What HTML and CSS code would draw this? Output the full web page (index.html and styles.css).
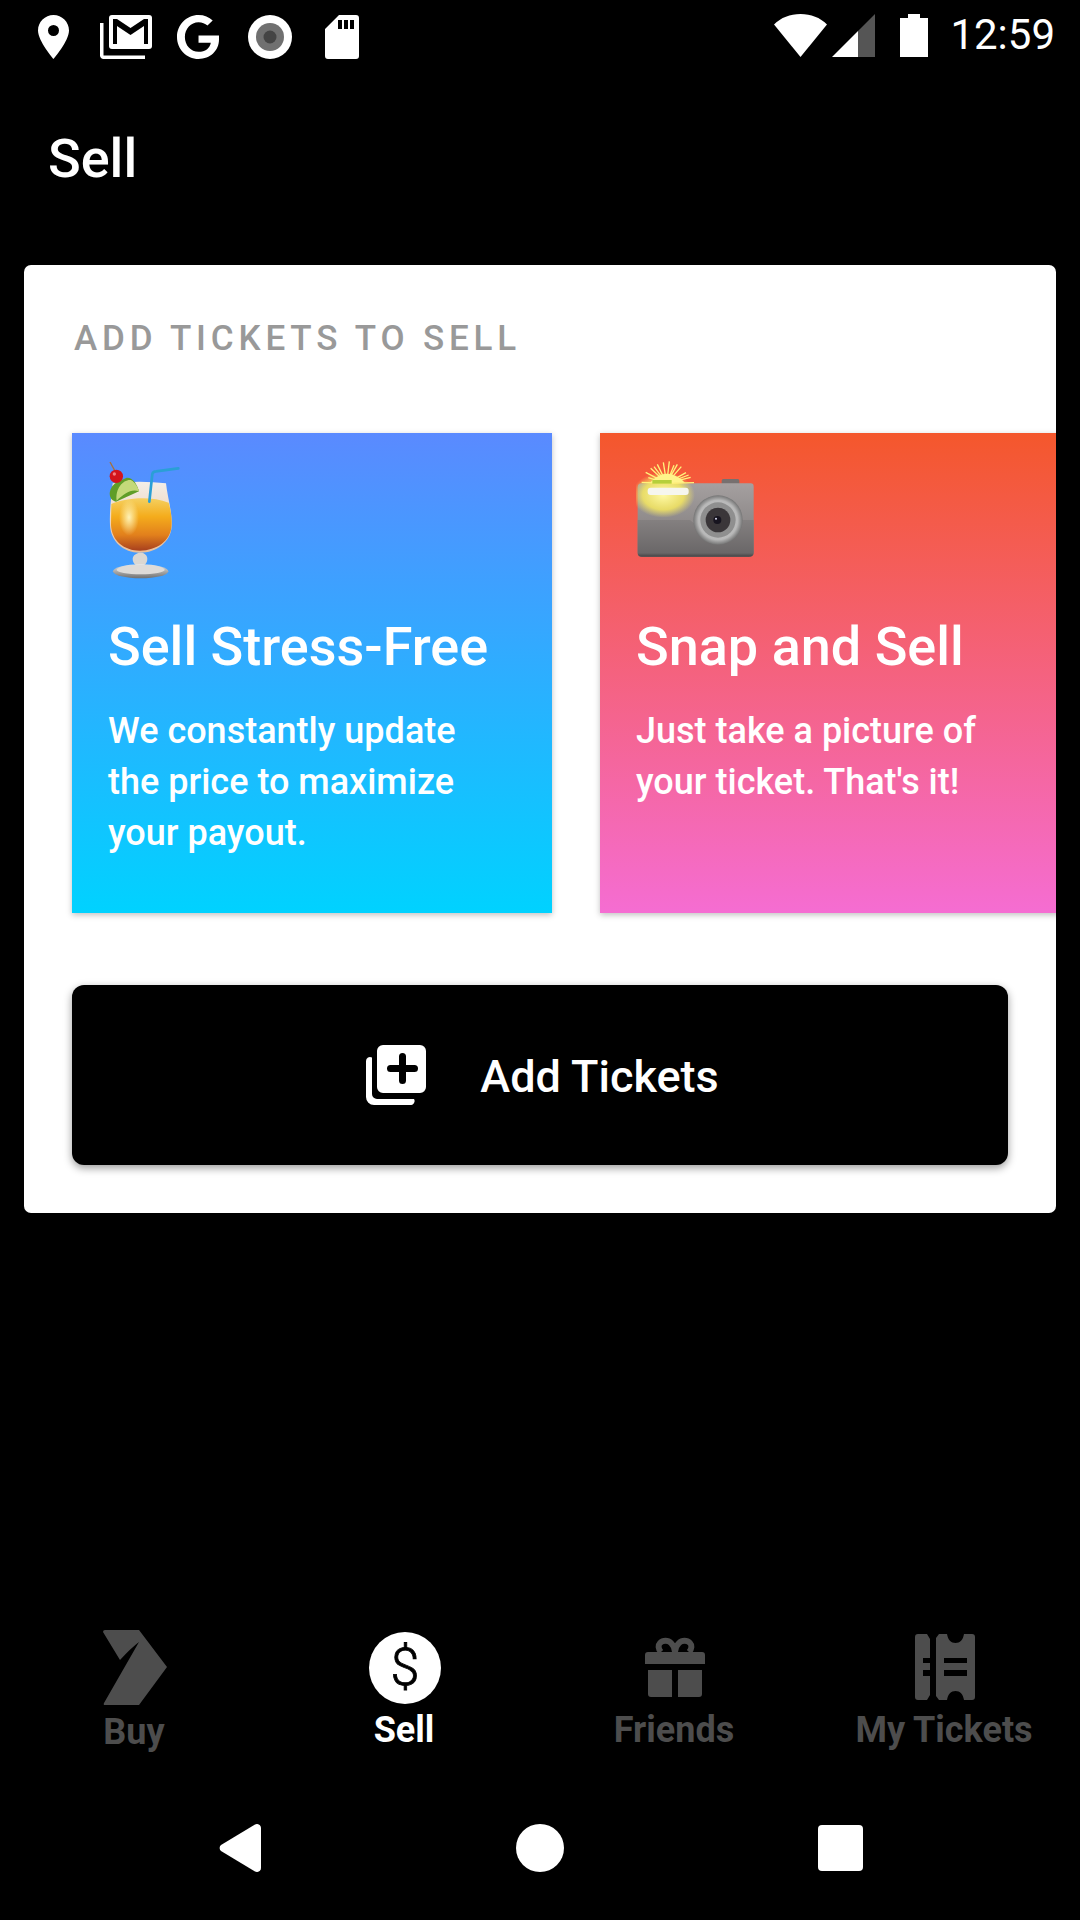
FILE: index.html
```html
<!DOCTYPE html>
<html lang="en">
<head>
<meta charset="utf-8">
<title>Sell</title>
<link rel="stylesheet" href="styles.css">
</head>
<body>
<div class="screen">
  <header class="status">
    <div class="status-left">
      <svg class="ic-loc" viewBox="0 0 31 44" preserveAspectRatio="none"><path fill="#fff" fill-rule="evenodd" d="M15.500 0C7 0 0 6.900 0 15.500 0 26 15.500 44 15.500 44S31 26 31 15.500C31 6.900 24 0 15.500 0zm0 10a5.500 5.500 0 1 1 0 11 5.500 5.500 0 0 1 0-11z"/></svg>
      <svg class="ic-gmail" viewBox="0 0 52 44"><path fill="none" stroke="#fff" stroke-width="3.5" d="M1.750 8v32.500a1.750 1.750 0 0 0 1.750 1.750H45"/><rect x="9" y="0" width="43" height="34" rx="3" fill="#fff"/><path d="M13 4h4L30.500 13 44 4h4V29h-4V11L30.500 20 17 11V29h-4z" fill="#000"/></svg>
      <svg class="ic-g" viewBox="0 0 40 43" preserveAspectRatio="none"><path fill="#fff" d="M20.500 0C26 0 30.500 2 34 5.300l-5 5C26.800 8.300 24 7 20.500 7 13.300 7 7.500 13.300 7.500 21.500S13.300 36 20.500 36c6.500 0 10.800-3.700 11.700-9H20.500v-7H40v4C40 35 31.500 43 20.500 43 9 43 0 33.500 0 21.500S9 0 20.500 0z"/></svg>
      <svg class="ic-rec" viewBox="0 0 44 44"><circle cx="22" cy="22" r="22" fill="#fff"/><circle cx="22" cy="22" r="14" fill="#707070"/><circle cx="22" cy="22" r="6.500" fill="#444"/></svg>
      <svg class="ic-sd" viewBox="0 0 34 44"><path fill="#fff" fill-rule="evenodd" d="M14 0h17a3 3 0 0 1 3 3v38a3 3 0 0 1-3 3H3a3 3 0 0 1-3-3V14zm-1 5v9h4V5zm6 0v9h4V5zm6 0v9h4V5z"/></svg>
    </div>
    <div class="status-right">
      <svg class="ic-wifi" viewBox="0 0 53 43"><path fill="#fff" d="M26.500 0C37 0 46 3.500 53 10.500L26.500 43 0 10.500C7 3.500 16 0 26.500 0z"/></svg>
      <svg class="ic-signal" viewBox="0 0 43 43"><path fill="#555" d="M43 0v43H26V17z"/><path fill="#fff" d="M26 17v26H0z"/></svg>
      <svg class="ic-batt" viewBox="0 0 28 43"><path fill="#fff" d="M8 0h12v4h8v39H0V4h8z"/></svg>
      <span class="clock">12:59</span>
    </div>
  </header>

  <div class="appbar"><h1 class="title">Sell</h1></div>

  <main class="card">
    <h2 class="eyebrow">ADD TICKETS TO SELL</h2>
    <div class="tiles">
      <article class="tile tile-blue">
        <svg class="emoji" viewBox="144 90 240 360">
          <defs>
            <linearGradient id="drink" x1="0" y1="0" x2="0" y2="1">
              <stop offset="0" stop-color="#f5d060"/><stop offset=".35" stop-color="#f4ac1c"/><stop offset=".7" stop-color="#e2801c"/><stop offset="1" stop-color="#a8401e"/>
            </linearGradient>
            <radialGradient id="shine" cx=".5" cy=".5" r=".5">
              <stop offset="0" stop-color="#fff6c0" stop-opacity=".95"/><stop offset="1" stop-color="#fff3b0" stop-opacity="0"/>
            </radialGradient>
            <linearGradient id="foot" x1="0" y1="0" x2="0" y2="1">
              <stop offset="0" stop-color="#e8e8e8"/><stop offset="1" stop-color="#707070"/>
            </linearGradient>
            <linearGradient id="glass" x1="0" y1="0" x2="0" y2="1">
              <stop offset="0" stop-color="#f3eee8"/><stop offset="1" stop-color="#e9bf9a"/>
            </linearGradient>
          </defs>
          <path d="M158 160Q240 150 318 160C322 200 338 250 335 290 332 335 290 368 240 368 190 368 152 335 150 285 148 245 154 200 158 160z" fill="url(#glass)"/>
          <path d="M154 222C190 205 270 195 326 218 335 250 336 275 334 292 331 332 290 362 240 362 192 362 155 332 153 285z" fill="url(#drink)"/>
          <ellipse cx="207" cy="262" rx="30" ry="55" fill="url(#shine)"/>
          <path d="M268 215L277 132Q279 124 288 124L355 115" fill="none" stroke="#2a9fd6" stroke-width="8" stroke-linecap="round" stroke-linejoin="round"/>
          <path d="M236 368h12q14 6 14 18t-10 20l8 18h-40l8-18q-10-8-10-20t18-18z" fill="#dad7d2"/>
          <ellipse cx="242" cy="424" rx="83" ry="21" fill="url(#foot)"/>
          <ellipse cx="242" cy="419" rx="72" ry="14" fill="#dedbd8"/>
          <path d="M168 215C140 208 146 172 168 158L200 143C220 142 232 165 237 184z" fill="#5f9d28"/>
          <path d="M170 212C165 175 190 148 212 150 225 156 233 170 237 184 215 175 192 190 170 212z" fill="#c4d97a"/>
          <path d="M150 96L166 125" stroke="#a5713f" stroke-width="4"/>
          <circle cx="169" cy="139" r="20" fill="#d2141c"/>
          <circle cx="163" cy="132" r="5" fill="#f47c7c"/>
        </svg>
        <h3 class="tile-title">Sell Stress-Free</h3>
        <p class="tile-body">We constantly update the price to maximize your payout.</p>
      </article>
      <article class="tile tile-red">
        <svg class="emoji" viewBox="108 90 360 360">
          <defs>
            <linearGradient id="body" x1="0" y1="0" x2="0" y2="1">
              <stop offset="0" stop-color="#a5a0a0"/><stop offset="1" stop-color="#7a7676"/>
            </linearGradient>
            <linearGradient id="lower" x1="0" y1="0" x2="0" y2="1">
              <stop offset="0" stop-color="#848080"/><stop offset=".9" stop-color="#6a6768"/><stop offset="1" stop-color="#454345"/>
            </linearGradient>
            <radialGradient id="glow" cx=".5" cy=".5" r=".5">
              <stop offset="0" stop-color="#fffaa8"/><stop offset=".65" stop-color="#f6e860" stop-opacity=".85"/><stop offset="1" stop-color="#f4e56a" stop-opacity="0"/>
            </radialGradient>
            <radialGradient id="lens" cx=".5" cy=".5" r=".5">
              <stop offset="0" stop-color="#d5d5d5"/><stop offset=".8" stop-color="#b8b8b8"/><stop offset="1" stop-color="#757575"/>
            </radialGradient>
          </defs>
          <rect x="365" y="147" width="53" height="18" rx="5" fill="#77706f"/>
          <path d="M125 160H452Q461 160 461 170V365Q461 380 447 380H125Q113 380 113 368V172Q113 160 125 160z" fill="url(#body)"/>
          <path d="M113 270H270Q300 300 340 270H461V368Q461 380 447 380H125Q113 380 113 368z" fill="url(#lower)"/>
          <ellipse cx="190" cy="195" rx="95" ry="68" fill="url(#glow)"/>
          <g class="rays">
            <path d="M200 160L125 157M200 160L137 127M200 160L152 115M200 160L172 103M200 160L190 97M200 160L208 94M200 160L222 106M200 160L244 110M200 160L258 128M200 160L282 158M200 160L272 142M200 160L145 143M200 160L162 110M200 160L232 103M200 160L266 135"/>
          </g>
          <path d="M150 158Q200 105 255 158z" fill="#fff48a"/>
          <rect x="157" y="150" width="58" height="11" fill="#b5cf3c"/>
          <rect x="143" y="173" width="123" height="22" rx="9" fill="#f6f6ee"/>
          <circle cx="354" cy="270" r="74" fill="url(#lens)"/>
          <circle cx="354" cy="270" r="53" fill="#8f8f8f"/>
          <circle cx="354" cy="270" r="37" fill="#3a3639"/>
          <circle cx="352" cy="270" r="12" fill="#17141f"/>
          <circle cx="348" cy="266" r="3" fill="#dcdcf0"/>
        </svg>
        <h3 class="tile-title">Snap and Sell</h3>
        <p class="tile-body">Just take a picture of your ticket. That's it!</p>
      </article>
    </div>
    <div class="action">
      <button class="add-btn" type="button">
        <svg class="ic-add" viewBox="0 0 60 60"><path fill="#fff" d="M0 16a4 4 0 0 1 6-3.500V49a5 5 0 0 0 5 5h37a4 4 0 0 1-4 6H8a8 8 0 0 1-8-8z"/><path fill="#fff" fill-rule="evenodd" d="M17 0h37a6 6 0 0 1 6 6v36a6 6 0 0 1-6 6H17a6 6 0 0 1-6-6V6a6 6 0 0 1 6-6zm16 11.500V20H24.500a3.500 3.500 0 0 0 0 7H33v8.500a3.500 3.500 0 0 0 7 0V27h8.500a3.500 3.500 0 0 0 0-7H40v-8.500a3.500 3.500 0 0 0-7 0z"/></svg>
        <span class="add-label">Add Tickets</span>
      </button>
    </div>
  </main>

  <div class="spacer"></div>

  <nav class="tabs">
    <div class="tab tab-buy">
      <svg class="tab-icon buy-icon" viewBox="0 0 64 75"><path fill="#4d4d4d" d="M2 0H36L64 37 36 75H2Q0 75 1 73L36 12Q28 18 17 30L0 2Q0 0 2 0z"/></svg>
      <span class="tab-label">Buy</span>
    </div>
    <div class="tab tab-active">
      <svg class="tab-icon" viewBox="0 0 72 72"><circle cx="36" cy="36" r="36" fill="#fff"/><text x="36" y="53" class="dollar" text-anchor="middle">$</text></svg>
      <span class="tab-label">Sell</span>
    </div>
    <div class="tab">
      <svg class="tab-icon gift-icon" viewBox="0 0 60 60"><path fill="#4d4d4d" fill-rule="evenodd" d="M3 15h54a3 3 0 0 1 3 3v9H0v-9a3 3 0 0 1 3-3zM3 33h24v27H6a3 3 0 0 1-3-3zM33 33h24v24a3 3 0 0 1-3 3H33z"/><path fill="none" stroke="#4d4d4d" stroke-width="6" d="M16 15c-3-3-3-7-1-9 3-3 8-3 11 0 3 3 4 7 4 9 0-2 1-6 4-9 3-3 8-3 11 0 2 2 2 6-1 9"/></svg>
      <span class="tab-label">Friends</span>
    </div>
    <div class="tab">
      <svg class="tab-icon ticket-icon" viewBox="0 0 60 66"><path fill="#4d4d4d" fill-rule="evenodd" d="M3 0h9l3 5v19H8v5h7v7H8v6h7v19l-3 5H3a3 3 0 0 1-3-3V3a3 3 0 0 1 3-3zM24 0h8c1 6 4 9 8.500 9S48 6 49 0h8a3 3 0 0 1 3 3v60a3 3 0 0 1-3 3h-8c-1-6-4-9-8.500-9S33 60 32 66h-8l-3-4V4zm5 24v5h23v-5zm0 12v6h23v-6z"/></svg>
      <span class="tab-label">My Tickets</span>
    </div>
  </nav>

  <footer class="sysnav">
    <svg class="nav-back" viewBox="0 0 42 48"><path fill="#fff" d="M36 .5C39 -1 42 1 42 4V44C42 47 39 49 36 47.500L2 27A4 4 0 0 1 2 21z"/></svg>
    <span class="nav-home"></span>
    <span class="nav-recent"></span>
  </footer>
</div>
</body>
</html>
```
FILE: styles.css
```css
* { box-sizing: border-box; }
html, body { margin: 0; padding: 0; background: #000; }
body { font-family: Roboto, "Noto Sans", sans-serif; color: #fff; }
.screen { width: 1080px; height: 1920px; display: flex; flex-direction: column; background: #000; overflow: hidden; }

.status { height: 72px; padding: 14px 25px 0 38px; display: flex; justify-content: space-between; align-items: flex-start; flex: none; }
.status-left, .status-right { display: flex; align-items: flex-start; }
.status-left { padding-top: 1px; }
.status svg { display: block; height: 43px; }
.status-left svg { height: 44px; }
.status .ic-loc { width: 31px; }
.status .ic-gmail { width: 52px; margin-left: 31px; }
.status .ic-g { width: 42px; margin-left: 25px; }
.status .ic-rec { width: 44px; margin-left: 29px; }
.status .ic-sd { width: 34px; margin-left: 33px; }
.ic-wifi { width: 53px; }
.ic-signal { width: 43px; margin-left: 5px; }
.ic-batt { width: 28px; margin-left: 25px; }
.clock { margin-left: 22px; font-size: 42px; line-height: 46px; margin-top: -2px; }

.appbar { height: 193px; flex: none; padding: 57px 0 0 48px; }
.title { margin: 0; font-size: 54px; line-height: 60px; font-weight: 500; }

.card { flex: none; height: 948px; margin: 0 24px; background: #fff; border-radius: 7px; overflow: hidden; }
.eyebrow { margin: 0; padding: 54px 0 0 50px; height: 168px; font-size: 35px; line-height: 40px; font-weight: 500; letter-spacing: 4.8px; color: #999; white-space: nowrap; }
.tiles { display: flex; gap: 48px; padding: 0 0 8px 48px; margin-bottom: 64px; }
.tile { flex: none; width: 480px; height: 480px; padding: 27px 36px 0; box-shadow: 0 2px 6px rgba(0,0,0,.25); }
.tile-blue { background: linear-gradient(180deg, #5a8aff 0%, #00d2ff 100%); }
.tile-red { background: linear-gradient(180deg, #f4572c 0%, #f56dd2 100%); }
.emoji { display: block; height: 120px; width: 120px; }
.tile-blue .emoji { width: 80px; }
.rays path { stroke: #fff27a; stroke-width: 4; fill: none; }
.tile-title { margin: 36px 0 0; font-size: 54px; line-height: 62px; font-weight: 500; white-space: nowrap; }
.tile-body { margin: 28px 0 0; padding-right: 20px; font-size: 36px; line-height: 51px; font-weight: 500; }

.action { padding: 0 48px; }
.add-btn { width: 100%; height: 180px; border: 0; border-radius: 12px; background: #000; color: #fff; display: flex; align-items: center; justify-content: center; gap: 54px; font: 500 45px Roboto, sans-serif; box-shadow: 0 3px 8px rgba(0,0,0,.4); padding: 0 0 0 5px; }
.add-label { margin-top: 2px; }
.ic-add { width: 60px; height: 60px; display: block; }

.spacer { flex: 1; }
.tabs { display: grid; grid-template-columns: repeat(4, 270px); flex: none; height: 148px; }
.tab { display: flex; flex-direction: column; align-items: center; color: #4d4d4d; padding-top: 4px; }
.tab-active { color: #fff; }
.tab-icon { display: block; width: 72px; height: 72px; margin-bottom: 6px; }
.buy-icon { width: 64px; height: 75px; margin-bottom: 7px; margin-top: -2px; }
.gift-icon { width: 60px; height: 60px; margin: 5px 0 13px; }
.ticket-icon { width: 60px; height: 66px; margin: 2px 0 10px; }
.tab-label { font-size: 36px; line-height: 40px; font-weight: 700; white-space: nowrap; margin-right: 2px; }
.dollar { font: 300 52px Roboto, sans-serif; fill: #000; stroke: #000; stroke-width: .8px; }

.sysnav { flex: none; height: 144px; padding-top: 48px; display: grid; grid-template-columns: repeat(3, 300px); justify-content: center; justify-items: center; align-items: center; align-content: start; }
.nav-back { width: 42px; height: 48px; display: block; }
.nav-home { width: 48px; height: 48px; border-radius: 50%; background: #fff; }
.nav-recent { width: 45px; height: 46px; border-radius: 4px; background: #fff; }
```
